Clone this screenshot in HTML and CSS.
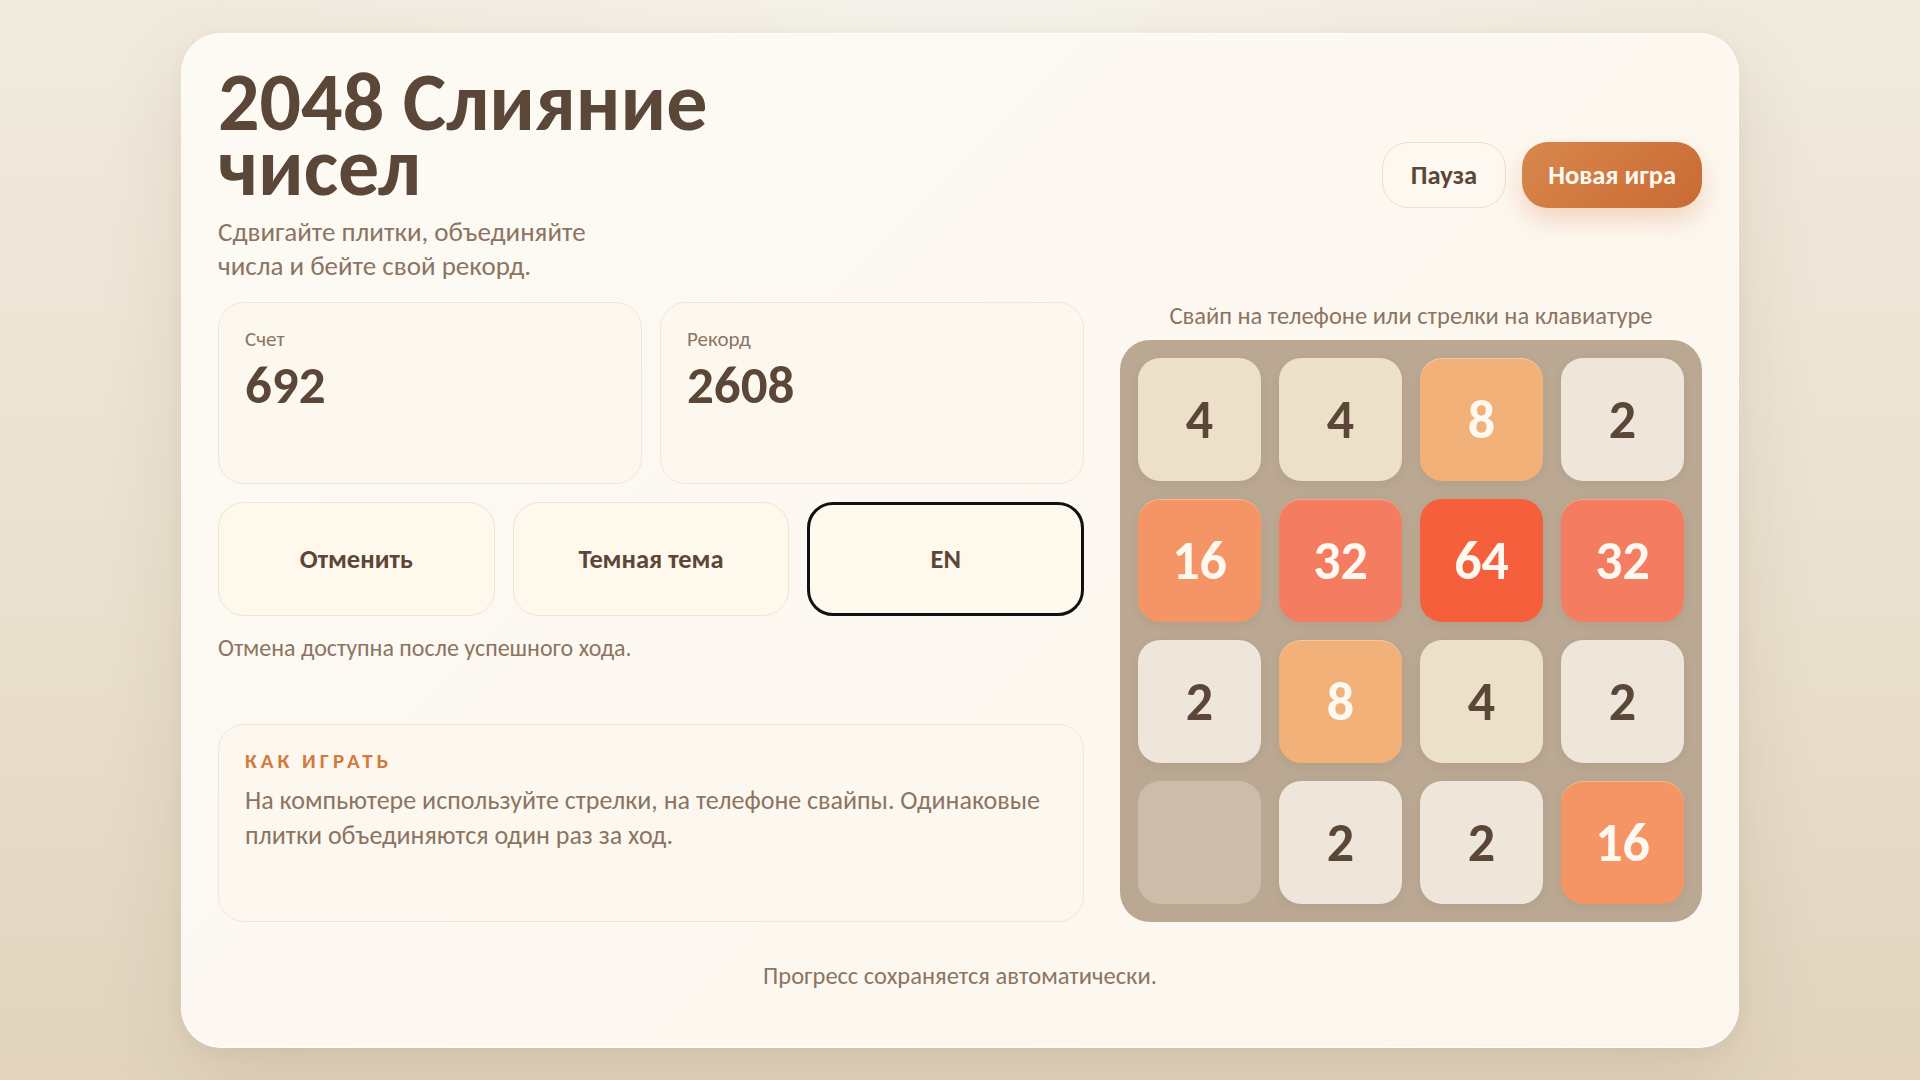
FILE: index.html
```html
<!DOCTYPE html>
<html lang="ru">
<head>
    <meta charset="UTF-8">
    <meta name="viewport" content="width=device-width, initial-scale=1.0">
    <title>2048 Слияние чисел</title>
    <link rel="stylesheet" href="styles.css">
</head>
<body>
    <main class="app">
        <header class="header">
            <div class="intro">
                <h1 class="title">2048 Слияние чисел</h1>
                <p class="subtitle">Сдвигайте плитки, объединяйте числа и бейте свой рекорд.</p>
            </div>
            <div class="actions">
                <button class="btn-pill">Пауза</button>
                <button class="btn-pill primary">Новая игра</button>
            </div>
        </header>

        <section class="layout">
            <div class="side">
                <div class="stats">
                    <div class="stat">
                        <div class="stat-label">Счет</div>
                        <div class="stat-value">692</div>
                    </div>
                    <div class="stat">
                        <div class="stat-label">Рекорд</div>
                        <div class="stat-value">2608</div>
                    </div>
                </div>
                <div class="controls">
                    <button class="control">Отменить</button>
                    <button class="control">Темная тема</button>
                    <button class="control focused">EN</button>
                </div>
                <p class="note">Отмена доступна после успешного хода.</p>
                <div class="howto">
                    <h2 class="howto-title">Как играть</h2>
                    <p class="howto-text">На компьютере используйте стрелки, на телефоне свайпы. Одинаковые плитки объединяются один раз за ход.</p>
                </div>
            </div>

            <div class="play">
                <p class="hint">Свайп на телефоне или стрелки на клавиатуре</p>
                <div class="board">
                    <div class="tile t4">4</div>
                    <div class="tile t4">4</div>
                    <div class="tile t8">8</div>
                    <div class="tile t2">2</div>
                    <div class="tile t16">16</div>
                    <div class="tile t32">32</div>
                    <div class="tile t64">64</div>
                    <div class="tile t32">32</div>
                    <div class="tile t2">2</div>
                    <div class="tile t8">8</div>
                    <div class="tile t4">4</div>
                    <div class="tile t2">2</div>
                    <div class="tile empty"></div>
                    <div class="tile t2">2</div>
                    <div class="tile t2">2</div>
                    <div class="tile t16">16</div>
                </div>
            </div>
        </section>

        <footer class="footer">Прогресс сохраняется автоматически.</footer>
    </main>
</body>
</html>
```
FILE: styles.css
```css
* {
    box-sizing: border-box;
}

body {
    margin: 0;
    min-height: 100vh;
    padding: 33px 0;
    display: flex;
    justify-content: center;
    align-items: center;
    font-family: Carlito, Calibri, "Liberation Sans", sans-serif;
    color: #5b4738;
    background:
        radial-gradient(ellipse at 50% 0%, #f6f3ec 0%, rgba(246, 243, 236, 0) 55%),
        linear-gradient(180deg, #f1ebdf 0%, #e9dfcd 60%, #e2d4be 100%);
}

.app {
    width: 1558px;
    padding: 36px;
    border-radius: 40px;
    border: 1px solid rgba(255, 255, 255, 0.7);
    background: linear-gradient(135deg, #fdfaf4 0%, #fcf7ee 100%);
    box-shadow: 0 30px 80px rgba(120, 90, 50, 0.14), 0 4px 16px rgba(120, 90, 50, 0.05);
}

/* header */
.header {
    display: flex;
    justify-content: space-between;
    align-items: center;
}

.title {
    margin: 0;
    max-width: 600px;
    font-size: 82px;
    line-height: 65px;
    font-weight: 700;
    color: #5b4738;
}

.subtitle {
    margin: 15px 0 0;
    max-width: 390px;
    font-size: 27px;
    line-height: 34px;
    color: #8b7562;
}

.actions {
    display: flex;
    gap: 16px;
    margin-bottom: 3px;
}

.btn-pill {
    height: 66px;
    padding: 0 28px;
    border-radius: 26px;
    border: 1px solid #ecdfcc;
    background: #fdf8f0;
    font-family: inherit;
    font-size: 26.5px;
    font-weight: 700;
    color: #5b4738;
    cursor: pointer;
}

.btn-pill.primary {
    padding: 0 26px;
    border: none;
    color: #fffaf2;
    background: linear-gradient(135deg, #d8874c 0%, #c96a34 100%);
    box-shadow: 0 12px 26px rgba(214, 120, 60, 0.28);
}

/* main layout */
.layout {
    display: grid;
    grid-template-columns: 1fr 582px;
    gap: 36px;
    margin-top: 19px;
}

.side {
    display: flex;
    flex-direction: column;
}

.stats {
    display: grid;
    grid-template-columns: 1fr 1fr;
    gap: 18px;
}

.stat {
    height: 182px;
    padding: 24px 26px;
    border-radius: 26px;
    border: 1px solid #f0e6d6;
    background: #fdf8ef;
}

.stat-label {
    font-size: 21px;
    line-height: 24px;
    color: #8b7562;
}

.stat-value {
    margin-top: 4px;
    font-size: 53px;
    line-height: 60px;
    font-weight: 700;
    color: #5b4738;
}

.controls {
    display: grid;
    grid-template-columns: repeat(3, 1fr);
    gap: 18px;
    margin-top: 18px;
}

.control {
    height: 114px;
    border-radius: 26px;
    border: 1px solid #f0e4d2;
    background: #fef8ed;
    font-family: inherit;
    font-size: 26.5px;
    font-weight: 700;
    color: #5b4738;
    cursor: pointer;
}

.control.focused {
    border: 3px solid #111;
}

.note {
    margin: 18px 0 0;
    font-size: 24px;
    line-height: 28px;
    color: #8b7562;
}

.howto {
    margin-top: auto;
    min-height: 198px;
    padding: 22px 18px 22px 26px;
    border-radius: 26px;
    border: 1px solid #f0e6d6;
    background: #fdf8ef;
}

.howto-title {
    margin: 0;
    font-size: 21px;
    line-height: 28px;
    font-weight: 700;
    letter-spacing: 4px;
    text-transform: uppercase;
    color: #d27b3c;
}

.howto-text {
    margin: 8px 0 0;
    font-size: 26px;
    line-height: 35px;
    color: #8b7562;
}

/* board */
.play {
    display: flex;
    flex-direction: column;
}

.hint {
    margin: 0 0 10px;
    text-align: center;
    font-size: 24.5px;
    line-height: 28px;
    color: #8b7562;
}

.board {
    display: grid;
    grid-template-columns: repeat(4, 1fr);
    grid-auto-rows: 1fr;
    gap: 18px;
    width: 582px;
    height: 582px;
    padding: 18px;
    border-radius: 30px;
    background: #bba893;
}

.tile {
    display: flex;
    justify-content: center;
    align-items: center;
    border-radius: 22px;
    font-size: 54px;
    font-weight: 700;
    color: #5b4738;
    box-shadow: 0 3px 10px rgba(90, 60, 30, 0.08);
}

.tile.empty {
    background: #ccbcaa;
    box-shadow: none;
}

.t2 { background: #eee5db; }
.t4 { background: #ede0c9; }
.t8 { background: #f2b179; color: #fdf8f0; box-shadow: inset 0 1px 0 rgba(255, 255, 255, 0.3), 0 3px 10px rgba(90, 60, 30, 0.08); }
.t16 { background: #f59565; color: #fdf8f0; box-shadow: inset 0 1px 0 rgba(255, 255, 255, 0.3), 0 3px 10px rgba(90, 60, 30, 0.08); }
.t32 { background: #f47c60; color: #fdf8f0; box-shadow: inset 0 1px 0 rgba(255, 255, 255, 0.3), 0 3px 10px rgba(90, 60, 30, 0.08); }
.t64 { background: #f55f3c; color: #fdf8f0; }

.footer {
    margin-top: 40px;
    padding-bottom: 21px;
    text-align: center;
    font-size: 24.5px;
    line-height: 28px;
    color: #8b7562;
}
```
